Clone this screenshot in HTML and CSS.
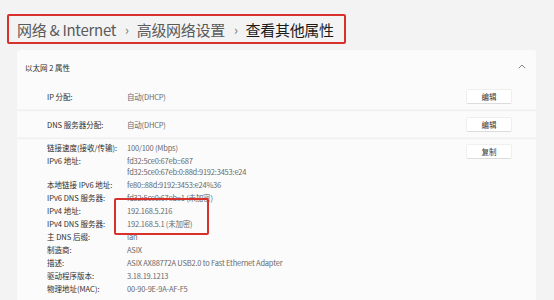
FILE: index.html
```html
<!DOCTYPE html>
<html lang="zh-CN">
<head>
<meta charset="utf-8">
<link rel="stylesheet" href="styles.css">
</head>
<body>
<div class="page">
  <div class="crumb">
    <span class="c-item">网络 &amp; Internet</span>
    <span class="c-sep">›</span>
    <span class="c-item">高级网络设置</span>
    <span class="c-sep">›</span>
    <span class="c-cur">查看其他属性</span>
  </div>

  <div class="card">
    <div class="card-head">
      <span class="title">以太网 2 属性</span>
      <svg class="chev" width="8" height="5" viewBox="0 0 8 5"><path d="M0.8 4.2 L4 1 L7.2 4.2" fill="none" stroke="#777" stroke-width="0.9"/></svg>
    </div>

    <div class="sec sec-single">
      <span class="lab">IP 分配:</span>
      <span class="val">自动(DHCP)</span>
      <span class="btn">编辑</span>
    </div>
    <div class="sep"></div>
    <div class="sec sec-single sec-b">
      <span class="lab">DNS 服务器分配:</span>
      <span class="val">自动(DHCP)</span>
      <span class="btn">编辑</span>
    </div>
    <div class="sep"></div>

    <div class="sec-multi">
      <div class="grid">
        <span class="lab">链接速度(接收/传输):</span><span class="val">100/100 (Mbps)</span>
        <span class="lab">IPv6 地址:</span><span class="val multi">fd32:5ce0:67eb::687<br>fd32:5ce0:67eb:0:88d:9192:3453:e24</span>
        <span class="lab">本地链接 IPv6 地址:</span><span class="val">fe80::88d:9192:3453:e24%36</span>
        <span class="lab">IPv6 DNS 服务器:</span><span class="val">fd32:5ce0:67eb::1 (未加密)</span>
        <span class="lab">IPv4 地址:</span><span class="val">192.168.5.216</span>
        <span class="lab">IPv4 DNS 服务器:</span><span class="val">192.168.5.1 (未加密)</span>
        <span class="lab">主 DNS 后缀:</span><span class="val">lan</span>
        <span class="lab">制造商:</span><span class="val">ASIX</span>
        <span class="lab">描述:</span><span class="val">ASIX AX88772A USB2.0 to Fast Ethernet Adapter</span>
        <span class="lab">驱动程序版本:</span><span class="val">3.18.19.1213</span>
        <span class="lab">物理地址(MAC):</span><span class="val">00-90-9E-9A-AF-F5</span>
      </div>
      <span class="btn btn-copy">复制</span>
    </div>
  </div>

  <div class="mark"></div>
</div>
</body>
</html>
```

FILE: styles.css
```css
html, body {
  margin: 0;
  padding: 0;
  background: #f3f3f3;
  font-family: "Noto Sans CJK SC", "Noto Sans", sans-serif;
  overflow: hidden;
}
.page {
  position: relative;
  width: 554px;
  height: 300px;
  padding-top: 14px;
  box-sizing: border-box;
}
.crumb {
  margin-left: 7px;
  width: 339px;
  height: 30px;
  box-sizing: border-box;
  border: 2px solid #d8312c;
  border-radius: 2px;
  display: flex;
  align-items: center;
  padding-left: 8px;
  font-size: 15px;
  letter-spacing: -0.3px;
  white-space: nowrap;
  color: #5a5a5a;
}
.c-sep {
  margin: 0 8px 0 9px;
  font-size: 13px;
  color: #777;
}
.c-cur {
  color: #1b1b1b;
}
.card {
  margin: 6px 0 0 17px;
  width: 519px;
  height: 250px;
  background: #fbfbfb;
  border-radius: 3px 3px 0 0;
  font-size: 7.5px;
}
.card-head {
  height: 34px;
  display: flex;
  align-items: center;
  justify-content: space-between;
  padding: 0 10px 0 8px;
}
.title {
  color: #2a2a2a;
}
.chev {
  margin-top: -2px;
}
.sec {
  display: flex;
  align-items: center;
  height: 25px;
  padding: 0 24px 0 30px;
}
.sec-b {
  height: 26px;
}
.lab {
  color: #2e2e2e;
  width: 80px;
  flex: none;
  white-space: nowrap;
}
.val {
  color: #6a6a6a;
  flex: 1;
  white-space: nowrap;
  letter-spacing: -0.2px;
}
.btn {
  width: 46px;
  height: 15px;
  box-sizing: border-box;
  background: #ffffff;
  border: 1px solid #efefef;
  border-bottom-color: #dcdcdc;
  border-radius: 2px;
  display: flex;
  align-items: center;
  justify-content: center;
  color: #333;
  flex: none;
}
.sep {
  height: 2px;
  background: #efefef;
  border-top: 1px solid #f6f6f6;
  box-sizing: border-box;
}
.sec-multi {
  display: flex;
  align-items: flex-start;
  padding: 3px 24px 0 30px;
}
.grid {
  flex: 1;
  display: grid;
  grid-template-columns: 80px 1fr;
  grid-auto-rows: auto;
  line-height: 13px;
}
.grid .lab {
  width: auto;
}
.grid .lab:first-child, .grid .lab:first-child + .val {
  line-height: 12px;
}
.multi {
  line-height: 11px;
  padding-top: 1px;
  padding-bottom: 1px;
}
.btn-copy {
  margin-top: 2px;
}
.mark {
  position: absolute;
  left: 114px;
  top: 198px;
  width: 95px;
  height: 37px;
  box-sizing: border-box;
  border: 2px solid #d8312c;
  border-radius: 2px;
}
```
